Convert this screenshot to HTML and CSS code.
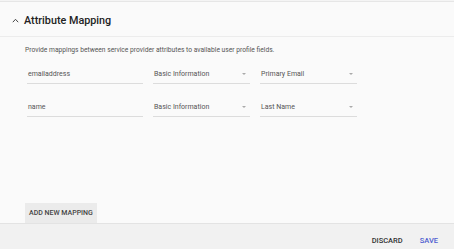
FILE: index.html
```html
<!DOCTYPE html>
<html lang="en">
<head>
  <meta charset="UTF-8" />
  <title>Attribute Mapping</title>
  <link rel="stylesheet" href="styles.css">
</head>
<body>
  <div class="panel">
    <div class="panel-header">
      <svg class="chevron" width="7" height="5" viewBox="0 0 7 5">
        <path d="M0.8 4.2 L3.5 1.3 L6.2 4.2" fill="none" stroke="#444" stroke-width="1"/>
      </svg>
      <span class="title">Attribute Mapping</span>
    </div>

    <div class="panel-body">
      <p class="desc">Provide mappings between service provider attributes to available user profile fields.</p>

      <div class="mapping-row">
        <div class="field field-text">emailaddress</div>
        <div class="field field-select">Basic Information <span class="arrow"></span></div>
        <div class="field field-select">Primary Email <span class="arrow"></span></div>
      </div>

      <div class="mapping-row">
        <div class="field field-text">name</div>
        <div class="field field-select">Basic Information <span class="arrow"></span></div>
        <div class="field field-select">Last Name <span class="arrow"></span></div>
      </div>

      <button class="add-btn">ADD NEW MAPPING</button>
    </div>

    <div class="panel-footer">
      <button class="flat-btn">DISCARD</button>
      <button class="flat-btn primary">SAVE</button>
    </div>
  </div>
</body>
</html>
```

FILE: styles.css
```css
* {
  box-sizing: border-box;
}

body {
  margin: 0;
  font-family: Roboto, 'Liberation Sans', Arial, sans-serif;
  background: #f4f4f4;
}

.panel {
  height: 249px;
  display: flex;
  flex-direction: column;
  background: #fafafa;
  border-top: 1px solid #e6e6e6;
  margin-top: 1px;
}

.panel-header {
  height: 35px;
  display: flex;
  align-items: center;
  padding: 3px 0 0 12px;
  border-bottom: 1px solid #ececec;
}

.chevron {
  margin-right: 5px;
  margin-top: -1px;
}

.title {
  font-size: 10.8px;
  font-weight: 500;
  color: #222;
}

.panel-body {
  flex: 1;
  display: flex;
  flex-direction: column;
  padding-left: 25px;
}

.desc {
  margin: 9px 0 0;
  font-size: 6.7px;
  line-height: 9px;
  color: #555;
}

.mapping-row {
  display: flex;
  gap: 10px;
  margin-top: 13px;
  padding-left: 2px;
}

.mapping-row:first-of-type {
  margin-top: 9px;
}

.field {
  position: relative;
  height: 20px;
  padding: 5px 0 4px 1px;
  font-size: 7px;
  line-height: 10px;
  color: #555;
  border-bottom: 1px solid #dcdcdc;
}

.field-text {
  width: 116px;
}

.field-select {
  width: 97px;
}

.arrow {
  position: absolute;
  right: 4px;
  top: 9px;
  width: 0;
  height: 0;
  border-left: 2.5px solid transparent;
  border-right: 2.5px solid transparent;
  border-top: 2.5px solid #aaa;
}

.add-btn {
  margin-top: auto;
  align-self: flex-start;
  height: 20px;
  padding: 0 4px;
  border: none;
  background: #ebebeb;
  font-family: inherit;
  font-size: 7px;
  font-weight: 500;
  color: #444;
}

.panel-footer {
  height: 27px;
  display: flex;
  justify-content: flex-end;
  align-items: center;
  gap: 9px;
  padding: 7px 12px 0 0;
  background: #f1f1f1;
  border-top: 1px solid #e3e3e3;
}

.flat-btn {
  border: none;
  background: none;
  padding: 0 4px;
  font-family: inherit;
  font-size: 7.5px;
  font-weight: 500;
  color: #333;
}

.flat-btn.primary {
  color: #4f5fd0;
}
```
